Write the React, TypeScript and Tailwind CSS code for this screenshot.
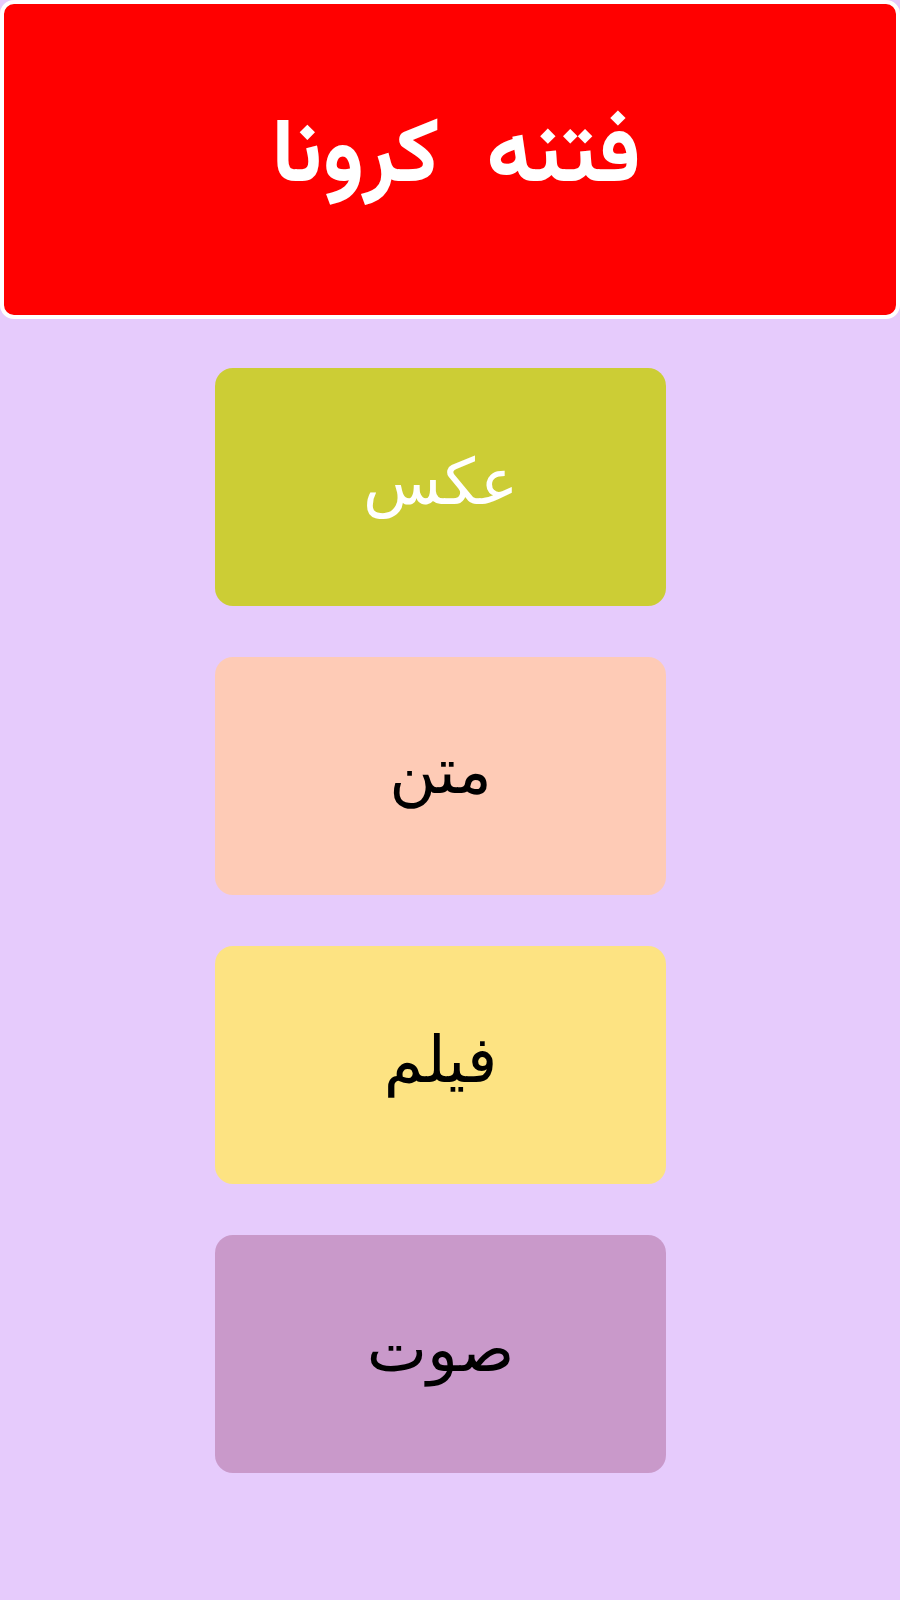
import React from "react";

const cards = [
  { label: "عکس", bg: "bg-[#cccd35]", text: "text-white" },
  { label: "متن", bg: "bg-[#fecbb6]", text: "text-black" },
  { label: "فیلم", bg: "bg-[#fde382]", text: "text-black" },
  { label: "صوت", bg: "bg-[#c999ca]", text: "text-black" },
];

export default function App() {
  return (
    <div dir="rtl" className="min-h-[1600px] w-[900px] bg-[#e6cbfc]">
      <div className="h-[319px] w-full border-[4px] border-white rounded-[14px] bg-[#ff0000] flex items-center justify-center">
        <h1 className="text-white font-bold text-[90px] leading-none [word-spacing:24px] font-['Vazirmatn','Noto_Sans_Arabic','DejaVu_Sans',sans-serif] pb-[2px] pl-[12px]">
          فتنه کرونا
        </h1>
      </div>
      <div dir="ltr" className="flex flex-col gap-[51px] pt-[49px] pl-[215px]">
        {cards.map((c) => (
          <div
            key={c.label}
            className={`w-[451px] h-[238px] rounded-[18px] ${c.bg} flex items-center justify-center`}
          >
            <span
              dir="rtl"
              className={`${c.text} text-[64px] leading-none pb-[10px] font-['DejaVu_Sans',sans-serif]`}
            >
              {c.label}
            </span>
          </div>
        ))}
      </div>
    </div>
  );
}
